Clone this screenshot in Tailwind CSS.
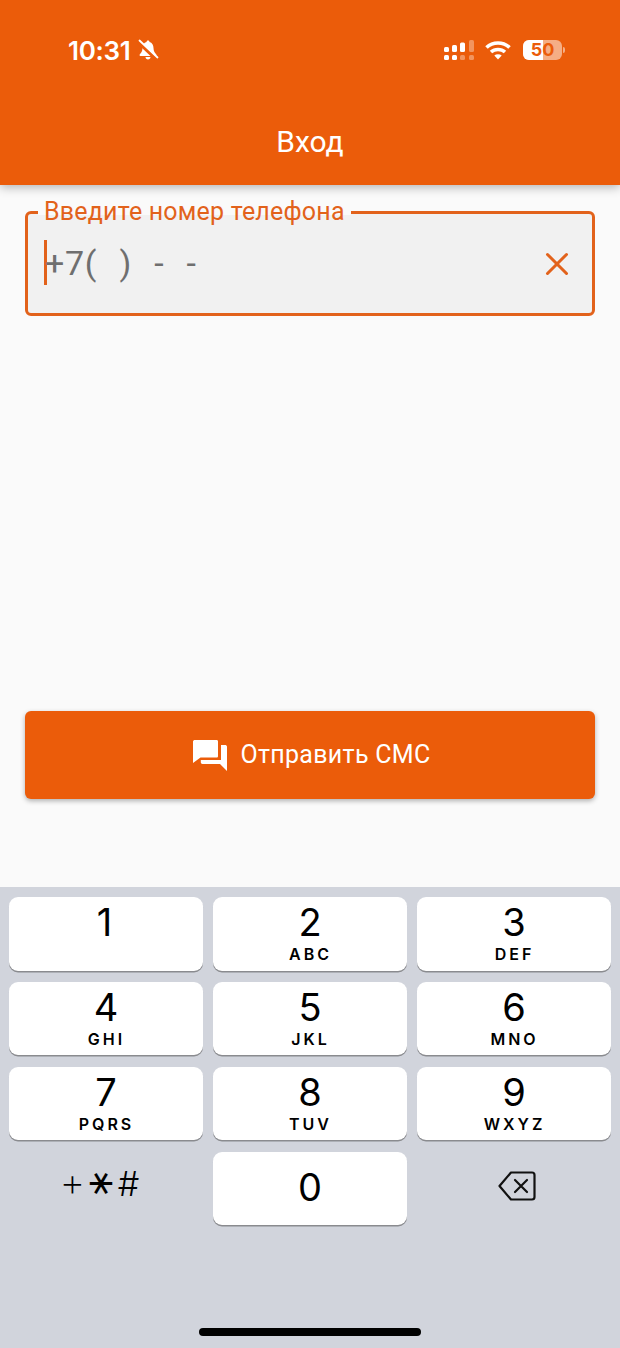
<!DOCTYPE html>
<html lang="ru">
<head>
    <meta charset="UTF-8">
    <meta name="viewport" content="width=device-width, initial-scale=1.0">
    <script src="https://cdn.jsdelivr.net/npm/@tailwindcss/browser@4"></script>
    <title>Вход</title>
</head>
<body class="bg-[#fafafa] font-['Roboto',sans-serif] w-[620px] h-[1348px] overflow-hidden">
    <!-- app bar -->
    <header class="relative z-10 h-[185px] bg-[#eb5c0a] text-white shadow-[0_2px_10px_rgba(0,0,0,0.3)]">
        <div class="flex items-center justify-between h-[100px] pl-[68px] pr-[55px]">
            <div class="flex items-center gap-[7px] font-['Inter',sans-serif] text-[26px] font-semibold tracking-[-0.3px]">
                <span>10:31</span>
                <svg width="22" height="22" viewBox="0 0 22 22" fill="#fff">
                    <path d="M11 1.500c-1 0-1.500.7-1.500 1.500C6.800 3.800 5.500 6 5.500 9c0 3.500-1.500 5-2.800 6.500-.4.6 0 1.500.8 1.500h15c.8 0 1.200-.9.8-1.500C18 14 16.500 12.500 16.500 9c0-3-1.300-5.200-4-6 0-.8-.5-1.500-1.500-1.500z"/>
                    <path d="M8.500 18h5c0 1.400-1.100 2.500-2.500 2.500S8.500 19.400 8.500 18z"/>
                    <path d="M1 3 19 20" stroke="#eb5c0a" stroke-width="3.200"/>
                    <path d="M2.500 1.500 20.500 18.500" stroke="#fff" stroke-width="1.800" stroke-linecap="round"/>
                </svg>
            </div>
            <div class="flex items-center">
                <svg class="mr-[8px]" width="33" height="20" viewBox="0 0 33 20" fill="#fff">
                    <rect x="0" y="7" width="5" height="5" rx="1.500"/>
                    <rect x="8" y="5" width="5" height="7" rx="1.500"/>
                    <rect x="16" y="2.500" width="5" height="9.500" rx="1.500"/>
                    <rect x="25" y="0" width="5" height="12" rx="1.500" fill-opacity="0.35"/>
                    <rect x="0" y="15" width="5" height="5" rx="1.500"/>
                    <rect x="8" y="15" width="5" height="5" rx="1.500"/>
                    <rect x="16" y="15" width="5" height="5" rx="1.500" fill-opacity="0.35"/>
                    <rect x="25" y="15" width="5" height="5" rx="1.500" fill-opacity="0.35"/>
                </svg>
                <svg class="mr-[12px]" width="26" height="20" viewBox="0 0 26 20" fill="none" stroke="#fff" stroke-width="3.600">
                    <path d="M1.500 7.500C7.800 1.500 18.200 1.500 24.500 7.500"/>
                    <path d="M6 12c3.800-3.400 10.200-3.400 14 0"/>
                    <path d="M13 19.500 9.300 15.500c2-1.600 5.400-1.600 7.400 0z" fill="#fff" stroke="none"/>
                </svg>
                <div class="flex items-center gap-[1px]">
                    <div class="relative w-[39px] h-[20px] rounded-[6px] bg-white/50">
                        <div class="w-[20px] h-full rounded-l-[6px] bg-white"></div>
                        <span class="absolute inset-0 flex items-center justify-center font-['Inter',sans-serif] text-[18px] leading-[20px] font-bold text-[#eb5c0a]">50</span>
                    </div>
                    <div class="w-[2px] h-[6px] rounded-r-sm bg-white/50"></div>
                </div>
            </div>
        </div>
        <h1 class="text-center text-[30px] leading-[34px] mt-[25px]">Вход</h1>
    </header>

    <main class="h-[702px] px-[25px] pt-[26px]">
        <!-- phone field -->
        <div class="relative h-[105px] rounded-[6px] border-[3px] border-[#e2621b] bg-[#f1f1f1] flex items-center pl-[16px] pr-[23px]">
            <span class="absolute left-[10px] -top-[16px] px-[6px] bg-[#fafafa] text-[25px] leading-[28px] text-[#e2621b] tracking-[0.2px] h-[17px]">Введите номер телефона</span>
            <div class="w-[3px] h-[45px] bg-[#e2621b] mt-[-2px]"></div>
            <span class="ml-[-2px] text-[34px] leading-[40px] text-[#6f6f6f] whitespace-pre mt-[-2px] tracking-[0.7px] [word-spacing:2px]">+7(  )  -  -</span>
            <svg class="ml-auto" width="24" height="24" viewBox="0 0 24 24" fill="none" stroke="#e2621b" stroke-width="3" stroke-linecap="round">
                <path d="M2.500 2.500 21.500 21.500M21.500 2.500 2.500 21.500"/>
            </svg>
        </div>

        <button class="mt-[395px] w-full h-[88px] rounded-[6px] bg-[#eb5c0a] text-white flex items-center justify-center gap-[13px] pl-[4px] text-[25px] tracking-[0.3px] shadow-[0_2px_5px_rgba(0,0,0,0.3)]">
            <svg width="34" height="31" viewBox="0 0 34 31" fill="#fff">
                <path d="M2 0h21.500c1 0 1.500.6 1.500 1.500V16c0 1-.5 1.500-1.500 1.500H7.500L0 23V1.500C0 .6.800 0 2 0z"/>
                <path d="M28 5h4c1 0 2 .7 2 1.700V31l-7-7H9.500c-1 0-1.700-.8-1.700-1.700V20H28z"/>
            </svg>
            <span>Отправить СМС</span>
        </button>
    </main>

    <!-- ios keypad -->
    <section class="relative h-[461px] bg-[#d1d4dc] font-['Inter',sans-serif] text-black">
        <div class="grid grid-cols-3 gap-x-[10px] gap-y-[11.4px] px-[9px] pt-[10px]">
            <div class="h-[73.5px] rounded-[9px] bg-white shadow-[0_1.500px_0_#8a8b8f] flex flex-col items-center"><span class="text-[38px] leading-[50px] mr-[3px]">1</span></div>
            <div class="h-[73.5px] rounded-[9px] bg-white shadow-[0_1.500px_0_#8a8b8f] flex flex-col items-center"><span class="text-[38px] leading-[50px]">2</span><span class="text-[16px] leading-[14px] font-semibold tracking-[3px] mr-[-1px]">ABC</span></div>
            <div class="h-[73.5px] rounded-[9px] bg-white shadow-[0_1.500px_0_#8a8b8f] flex flex-col items-center"><span class="text-[38px] leading-[50px]">3</span><span class="text-[16px] leading-[14px] font-semibold tracking-[3px] mr-[-1px]">DEF</span></div>
            <div class="h-[73.5px] rounded-[9px] bg-white shadow-[0_1.500px_0_#8a8b8f] flex flex-col items-center"><span class="text-[38px] leading-[50px]">4</span><span class="text-[16px] leading-[14px] font-semibold tracking-[3px] mr-[-1px]">GHI</span></div>
            <div class="h-[73.5px] rounded-[9px] bg-white shadow-[0_1.500px_0_#8a8b8f] flex flex-col items-center"><span class="text-[38px] leading-[50px]">5</span><span class="text-[16px] leading-[14px] font-semibold tracking-[3px] mr-[-1px]">JKL</span></div>
            <div class="h-[73.5px] rounded-[9px] bg-white shadow-[0_1.500px_0_#8a8b8f] flex flex-col items-center"><span class="text-[38px] leading-[50px]">6</span><span class="text-[16px] leading-[14px] font-semibold tracking-[3px] mr-[-1px]">MNO</span></div>
            <div class="h-[73.5px] rounded-[9px] bg-white shadow-[0_1.500px_0_#8a8b8f] flex flex-col items-center"><span class="text-[38px] leading-[50px]">7</span><span class="text-[16px] leading-[14px] font-semibold tracking-[3px] mr-[-1px]">PQRS</span></div>
            <div class="h-[73.5px] rounded-[9px] bg-white shadow-[0_1.500px_0_#8a8b8f] flex flex-col items-center"><span class="text-[38px] leading-[50px]">8</span><span class="text-[16px] leading-[14px] font-semibold tracking-[3px] mr-[-1px]">TUV</span></div>
            <div class="h-[73.5px] rounded-[9px] bg-white shadow-[0_1.500px_0_#8a8b8f] flex flex-col items-center"><span class="text-[38px] leading-[50px]">9</span><span class="text-[16px] leading-[14px] font-semibold tracking-[3px] mr-[-1px]">WXYZ</span></div>
            <div class="h-[73.5px] flex items-start justify-center gap-[8px] pt-[10px] pr-[11px] leading-[44px]">
                <span class="w-[20px] flex justify-center text-[40px] font-extralight mt-[-2px]">+</span>
                <span class="w-[20px] flex justify-center text-[40px] font-['DejaVu_Sans',sans-serif] mt-[-4px]">⚹</span>
                <span class="w-[20px] flex justify-center text-[34px] font-light">#</span>
            </div>
            <div class="h-[73.5px] rounded-[9px] bg-white shadow-[0_1.500px_0_#8a8b8f] flex flex-col items-center justify-center pb-[3px]"><span class="text-[38px] leading-[50px]">0</span></div>
            <div class="h-[73.5px] flex items-center justify-center pb-[4px] pl-[6px]">
                <svg width="38" height="30" viewBox="0 0 38 30" fill="none" stroke="#111" stroke-width="2.200" stroke-linejoin="round" stroke-linecap="round">
                    <path d="M13 1.500h21c1.500 0 2.500 1 2.500 2.500v22c0 1.500-1 2.500-2.500 2.500H13L1.500 15z"/>
                    <path d="M17 9 29 21M29 9 17 21"/>
                </svg>
            </div>
        </div>
        <div class="absolute left-[199px] bottom-[12px] w-[222px] h-[8px] rounded-full bg-black"></div>
    </section>
</body>
</html>
